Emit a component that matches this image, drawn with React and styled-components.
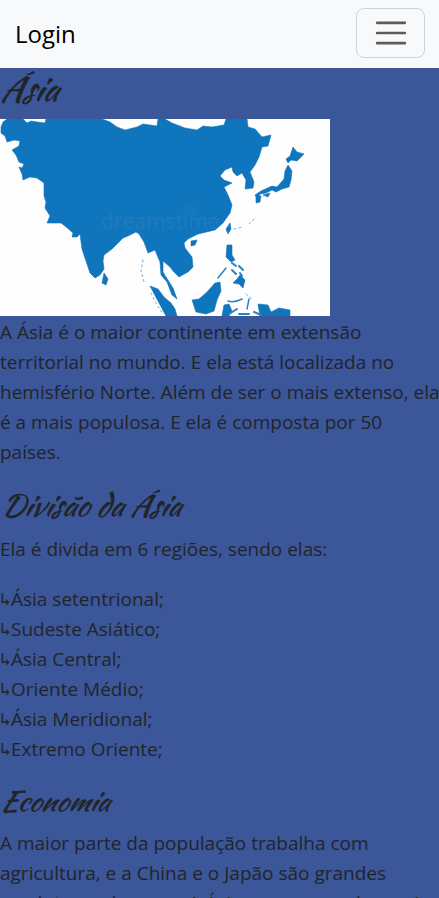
import React from "react";
import styled, { createGlobalStyle } from "styled-components";

const GlobalStyle = createGlobalStyle`
  *, *::before, *::after { box-sizing: border-box; }
  body {
    margin: 0;
    background: #3b5699;
    color: #212529;
    font-family: "Segoe UI", "Open Sans", sans-serif;
    font-size: 19px;
    line-height: 30px;
    overflow-x: hidden;
  }
`;

const Navbar = styled.nav`
  display: flex;
  align-items: center;
  justify-content: space-between;
  padding: 8px 14px 10px 15px;
  background: #f8f9fa;
`;

const Brand = styled.a`
  padding-top: 2px;
  color: #000;
  font-size: 24px;
  line-height: 36px;
  text-decoration: none;
`;

const Toggler = styled.button`
  display: flex;
  align-items: center;
  justify-content: center;
  width: 69px;
  height: 50px;
  padding: 0;
  border: 1px solid #d0d2d4;
  border-radius: 8px;
  background: transparent;
  cursor: pointer;
`;

const Heading = styled.h2`
  margin: 0 0 10px;
  font-family: "Kaushan Script", cursive;
  font-size: ${(p) => p.$size}px;
  line-height: ${(p) => p.$line}px;
  font-weight: 500;
  font-style: italic;
`;

const MapPicture = styled.svg`
  display: block;
  width: 330px;
  max-width: 100%;
  height: auto;
  margin-bottom: 1px;
  background: #fefefe;
`;

const Paragraph = styled.p`
  margin: 0 -8px 20px 0;
`;

const RegionList = styled.ul`
  margin: 0 0 20px;
  padding: 0;
  list-style: none;
`;

const Region = styled.li`
  display: flex;
`;

const Arrow = styled.span`
  width: 11px;
  font-family: "DejaVu Sans Mono", monospace;
  font-size: 18px;
`;

const regions = [
  "Ásia setentrional;",
  "Sudeste Asiático;",
  "Ásia Central;",
  "Oriente Médio;",
  "Ásia Meridional;",
  "Extremo Oriente;",
];

function AsiaMap() {
  return (
    <MapPicture viewBox="0 0 330 197" role="img" aria-label="Mapa da Ásia">
      <g fill="#0f75bd" stroke="#0f75bd" strokeWidth="0.6" strokeLinejoin="round">
        <path d="M7 0L3 3L1 8L1 14L5 17L7 23L14 21L20 22L19 27L12 31L16 36L19 43L24 45L22 49L19 48L22 55L23 61L30 58L37 59L44 64L44 77L46 83L45 89L50 97L47 104L61 104L65 107L73 114L72 118L77 118L80 115L82 130L86 142L90 154L95 159L100 156L104 150L103 142L104 136L112 130L123 119L128 117L136 113L139 115L144 123L148 134L155 131L160 143L161 156L167 163L172 176L177 180L173 169L166 158L163 153L163 142L170 148L173 152L179 158L188 153L193 148L192 138L185 129L184 124L188 120L198 115L215 111L223 104L230 94L232 86L228 76L224 68L232 64L224 61L220 57L225 51L232 48L233 53L237 57L242 54L246 61L245 70L253 69L254 63L250 53L255 46L259 38L262 28L268 27L271 16L262 18L255 10L248 8L247 0L226 0L224 6L218 7L212 8L203 7L197 11L185 9L172 4L165 0L158 0L157 7L143 5L137 8L125 11L117 8L110 3L102 0L46 0L45 4L37 3L31 2L27 4L23 0Z" />
        <path d="M104 154L108 160L106 166L102 164Z" />
        <path d="M191 122L197 121L195 126L191 127Z" />
        <path d="M230 104L231 110L228 115L226 110Z" />
        <path d="M293 28L297 33L304 35L297 42L291 41L288 44L286 40L290 37Z" />
        <path d="M288 46L292 52L291 61L289 68L282 70L276 73L272 71L266 74L260 75L257 79L255 76L261 72L272 67L277 68L284 60L285 52Z" />
        <path d="M256 76L261 77L260 83L256 84ZM263 76L270 74L268 78Z" />
        <path d="M150 167L158 170L164 178L171 184L175 190L177 197L166 197L159 184Z" />
        <path d="M220 163L221 172L217 181L214 192L206 195L196 193L192 181L199 180L207 173L215 164Z" />
        <path d="M227 126L232 126L232 136L235 141L231 143L226 138Z" />
        <path d="M240 156L245 161L243 169L239 165L233 164L237 160Z" />
        <path d="M224 186L229 185L232 192L229 197L222 197ZM258 185L268 186L271 193L279 189L290 191V197H260Z" />
      </g>
      <g fill="none" stroke="#2b83c2" strokeLinecap="round">
        <path d="M218 159L226 149M228 182C233 184 238 182 242 180M249 180L247 190" strokeWidth="1.5" />
        <path d="M232 144L236 147M239 147L243 151M232 151L236 155M240 154L242 157M229 195L237 190M239 195H249M254 193L261 196" strokeWidth="2" />
        <path d="M143 141L141 152L144 163M151 174L156 184L163 195M234 110L243 108M249 105L255 99M246 175L252 180" strokeWidth="1" strokeDasharray="2 3" opacity=".65" />
      </g>
      <g stroke="#3987bb" fill="none" opacity=".6">
        <circle cx="191" cy="92" r="5" />
        <circle cx="191" cy="92" r="2" />
      </g>
      <text x="101" y="110" fill="#2d80ba" opacity=".6" fontFamily="Open Sans, sans-serif" fontSize="21">dreamstime</text>
    </MapPicture>
  );
}

export default function App() {
  return (
    <>
      <GlobalStyle />
      <Navbar>
        <Brand href="#login">Login</Brand>
        <Toggler type="button" aria-label="Abrir menu">
          <svg width="38" height="38" viewBox="0 0 30 30" aria-hidden="true">
            <path d="M4 7h22M4 15h22M4 23h22" stroke="#5b5c5d" strokeWidth="2" strokeLinecap="round" />
          </svg>
        </Toggler>
      </Navbar>
      <main>
        <Heading as="h1" $size={34} $line={41}>Ásia</Heading>
        <AsiaMap />
        <Paragraph>
          A Ásia é o maior continente em extensão territorial no mundo. E ela está
          localizada no hemisfério Norte. Além de ser o mais extenso, ela é a mais
          populosa. E ela é composta por 50 países.
        </Paragraph>
        <Heading $size={30} $line={37}>Divisão da Ásia</Heading>
        <Paragraph>Ela é divida em 6 regiões, sendo elas:</Paragraph>
        <RegionList>
          {regions.map((region) => (
            <Region key={region}>
              <Arrow>↳</Arrow>
              {region}
            </Region>
          ))}
        </RegionList>
        <Heading $size={28} $line={34}>Economia</Heading>
        <Paragraph>
          A maior parte da população trabalha com agricultura, e a China e o Japão
          são grandes produtores de arroz. A Ásia possue um dos mais
        </Paragraph>
      </main>
    </>
  );
}
